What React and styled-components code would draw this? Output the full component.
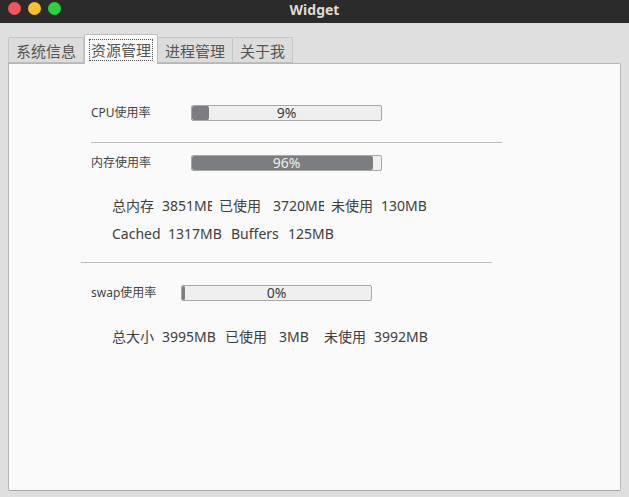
import React from "react";
import styled, { createGlobalStyle } from "styled-components";

const GlobalStyle = createGlobalStyle`
  html, body {
    margin: 0;
    padding: 0;
    background: #dfdfdf;
  }
  * {
    box-sizing: border-box;
  }
`;

const FONT = `"Noto Sans", "Noto Sans CJK SC", sans-serif`;

const Window = styled.div`
  width: 629px;
  height: 497px;
  background: #dfdfdf;
  font-family: ${FONT};
  display: flex;
  flex-direction: column;
  overflow: hidden;
`;

const TitleBar = styled.div`
  height: 23px;
  background: #2b2b2b;
  position: relative;
  display: flex;
  align-items: center;
  justify-content: center;
  flex-shrink: 0;
`;

const Lights = styled.div`
  position: absolute;
  left: 8px;
  top: 2px;
  display: flex;
  gap: 7px;
`;

const Light = styled.span`
  width: 13px;
  height: 13px;
  border-radius: 50%;
  background: ${(p) => p.$color};
`;

const Title = styled.div`
  color: #dfdbd2;
  font-weight: bold;
  font-size: 14px;
  line-height: 18px;
  margin-top: -4px;
`;

const TabBar = styled.div`
  display: flex;
  align-items: flex-end;
  height: 29px;
  padding-left: 8px;
  margin-top: 11px;
  position: relative;
  z-index: 1;
  flex-shrink: 0;
`;

const Tab = styled.div`
  height: ${(p) => (p.$active ? "30px" : "26px")};
  margin-bottom: ${(p) => (p.$active ? "-1px" : "0")};
  padding: ${(p) => (p.$active ? "1px 4px 0" : "1px 7px 0")};
  display: flex;
  align-items: center;
  font-size: 15px;
  line-height: 18px;
  color: #555;
  background: ${(p) => (p.$active ? "#fafafa" : "#dcdcdc")};
  border: 1px solid ${(p) => (p.$active ? "#bdbdbd" : "#c6c6c6")};
  border-bottom: ${(p) => (p.$active ? "none" : "1px solid #bdbdbd")};
  border-left: ${(p) => (p.$first || p.$active ? "" : "none")};
  border-radius: 2px 2px 0 0;
`;

const FocusText = styled.span`
  border: 1px dotted #555;
  padding: 1px 1px;
  line-height: 18px;
`;

const Panel = styled.div`
  margin: 0 8px;
  width: 613px;
  height: 428px;
  background: #fafafa;
  border: 1px solid #b6b6b6;
  border-bottom-color: #a9a9a9;
  border-radius: 0 2px 2px 2px;
  padding-left: 82px;
  display: flex;
  flex-direction: column;
  flex-shrink: 0;
`;

const UsageRow = styled.div`
  display: flex;
  align-items: center;
  height: 16px;
  margin-top: ${(p) => p.$top}px;
  margin-left: ${(p) => p.$shift || 0}px;
`;

const UsageLabel = styled.div`
  width: ${(p) => p.$w}px;
  font-size: 12px;
  line-height: 16px;
  color: #444;
`;

const Bar = styled.div`
  position: relative;
  width: 191px;
  height: 16px;
  background: #efefef;
  border: 1px solid #a8a8a8;
  border-radius: 2px;
`;

const Fill = styled.div`
  height: 100%;
  background: #7b7d81;
  border-radius: 2px;
`;

const BarText = styled.span`
  position: absolute;
  inset: 0;
  display: flex;
  align-items: center;
  justify-content: center;
  font-size: 14px;
  line-height: 14px;
  color: ${(p) => (p.$light ? "#f0f0f0" : "#3a3a3a")};
`;

const Divider = styled.div`
  width: 411px;
  height: 1px;
  flex-shrink: 0;
  background: #bcbcbc;
  margin-top: ${(p) => p.$top}px;
  margin-left: ${(p) => p.$shift || 0}px;
`;

const StatRow = styled.div`
  display: flex;
  margin-left: 21px;
  margin-top: ${(p) => p.$top}px;
  height: 20px;
  line-height: 20px;
  font-size: 14px;
  color: #404040;
`;

const Cell = styled.span`
  width: ${(p) => p.$w}px;
  margin-right: ${(p) => p.$mr || 0}px;
  white-space: nowrap;
  overflow: hidden;
  flex-shrink: 0;
`;

function Usage({ label, labelWidth, value, top, shift }) {
  const light = value > 50;
  return (
    <UsageRow $top={top} $shift={shift}>
      <UsageLabel $w={labelWidth}>{label}</UsageLabel>
      <Bar>
        <Fill style={{ width: `${Math.max(value, 1.5)}%` }} />
        <BarText $light={light}>{value}%</BarText>
      </Bar>
    </UsageRow>
  );
}

function Stats({ top, cells }) {
  return (
    <StatRow $top={top}>
      {cells.map(([text, w, mr], i) => (
        <Cell key={i} $w={w} $mr={mr}>
          {text}
        </Cell>
      ))}
    </StatRow>
  );
}

const tabs = ["系统信息", "资源管理", "进程管理", "关于我"];

export default function App() {
  return (
    <>
      <GlobalStyle />
      <Window>
        <TitleBar>
          <Lights>
            <Light $color="#f2545b" />
            <Light $color="#fbbf2d" />
            <Light $color="#2bd341" />
          </Lights>
          <Title>Widget</Title>
        </TitleBar>
        <TabBar>
          {tabs.map((t, i) =>
            i === 1 ? (
              <Tab key={t} $active>
                <FocusText>{t}</FocusText>
              </Tab>
            ) : (
              <Tab key={t} $first={i === 0}>
                {t}
              </Tab>
            )
          )}
        </TabBar>
        <Panel>
          <Usage label="CPU使用率" labelWidth={100} value={9} top={41} />
          <Divider $top={21} />
          <Usage label="内存使用率" labelWidth={100} value={96} top={12} />
          <Stats
            top={25}
            cells={[
              ["总内存", 50],
              ["3851MB", 50, 7],
              ["已使用", 54],
              ["3720MB", 51, 7],
              ["未使用", 50],
              ["130MB", 60],
            ]}
          />
          <Stats
            top={8}
            cells={[
              ["Cached", 56],
              ["1317MB", 63],
              ["Buffers", 57],
              ["125MB", 60],
            ]}
          />
          <Divider $top={18} $shift={-10} />
          <Usage label="swap使用率" labelWidth={90} value={0} top={22} />
          <Stats
            top={26}
            cells={[
              ["总大小", 50],
              ["3995MB", 63],
              ["已使用", 54],
              ["3MB", 45],
              ["未使用", 50],
              ["3992MB", 60],
            ]}
          />
        </Panel>
      </Window>
    </>
  );
}
